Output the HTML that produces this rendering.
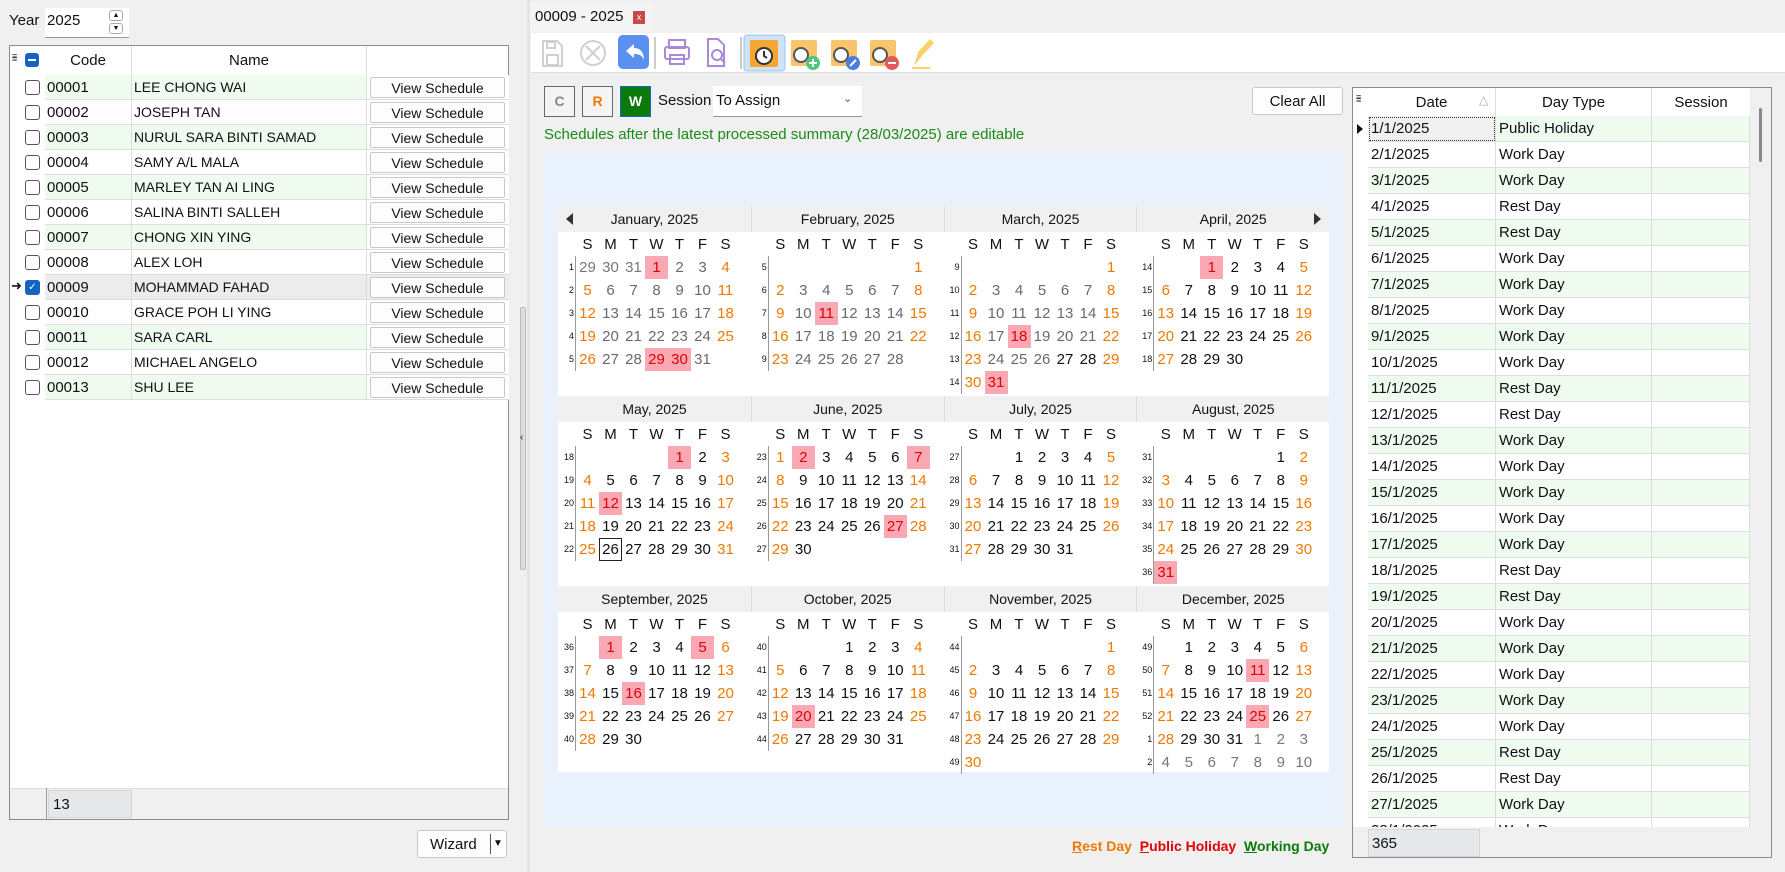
<!DOCTYPE html>
<html><head><meta charset="utf-8">
<style>
*{box-sizing:border-box;margin:0;padding:0}
body{width:1785px;height:872px;overflow:hidden;background:#f0f0f0;font-family:"Liberation Sans",sans-serif;font-size:14px;color:#111;position:relative}
.a{position:absolute}
.cell{position:absolute;display:flex;align-items:center;overflow:hidden;white-space:nowrap}
.btn{position:absolute;background:#fdfdfd;border:1px solid #c8c8c8;border-radius:3px;display:flex;align-items:center;justify-content:center}
.cb{position:absolute;width:15px;height:15px;border:1px solid #555;border-radius:3px;background:#fff}
</style></head><body>

<!-- LEFT PANEL -->
<div class="a" style="left:9px;top:12px;font-size:15px">Year</div>
<div class="a" style="left:45px;top:8px;width:84px;height:30px;background:#fff;border-bottom:1px solid #999"><span class="a" style="left:2px;top:4px;font-size:15px">2025</span>
<div class="a" style="left:64px;top:2px;width:14px;height:11px;border:1px solid #aaa;border-radius:3px;font-size:7px;text-align:center;line-height:9px">▲</div>
<div class="a" style="left:64px;top:15px;width:14px;height:11px;border:1px solid #aaa;border-radius:3px;font-size:7px;text-align:center;line-height:9px">▼</div></div>

<div class="a" id="lg" style="left:9px;top:45px;width:500px;height:775px;background:#fff;border:1px solid #8a8a92"></div>

<!-- splitter -->
<div class="a" style="left:527px;top:0;width:3px;height:872px;background:#e4e4e4"></div>
<div class="a" style="left:520px;top:307px;width:6px;height:263px;background:#ddd;border:1px solid #bbb;border-radius:2px"></div>
<div class="a" style="left:520px;top:432px;font-size:10px">‹</div>

<div class="btn" style="left:417px;top:830px;width:90px;height:28px;justify-content:flex-start;padding-left:12px;font-size:15px">Wizard<span class="a" style="left:72px;top:3px;width:1px;height:20px;background:#555"></span><span class="a" style="left:75px;top:7px;font-size:10px">▼</span></div>

<!-- MIDDLE -->
<div class="a" style="left:530px;top:2px;width:122px;height:30px;background:#f4f4f4"><span class="a" style="left:5px;top:6px;font-size:15px">00009 - 2025</span><span class="a" style="left:103px;top:9px;width:12px;height:13px;background:#c94848;color:#fff;font-size:9px;text-align:center;line-height:12px">x</span></div>
<div class="a" style="left:531px;top:33px;width:1254px;height:40px;background:#fff;border-bottom:1px solid #ddd"></div>
<svg class="a" style="left:531px;top:33px" width="420" height="40" viewBox="0 0 420 40">
 <g fill="none" stroke="#d0d0d0" stroke-width="2"><path d="M12 8h14l5 5v20H12z"/><rect x="16" y="22" width="11" height="10"/><rect x="16" y="9" width="8" height="6"/><circle cx="62" cy="20" r="12"/><path d="M55 13l14 14M69 13L55 27"/></g>
 <rect x="87" y="2" width="31" height="34" rx="5" fill="#5b8ff0"/><path d="M95 18l8-7v4c6 0 10 4 10 12c-2-5-5-6-10-6v4z" fill="#fff"/>
 <line x1="124" y1="4" x2="124" y2="36" stroke="#999"/>
 <g fill="none" stroke="#a88ad8" stroke-width="2"><rect x="138" y="7" width="16" height="8"/><rect x="134" y="14" width="24" height="12" rx="2"/><rect x="139" y="22" width="14" height="9"/><path d="M177 6h10l6 6v21h-16z"/><circle cx="186" cy="22" r="5"/><path d="M190 26l4 4"/></g>
 <line x1="210" y1="4" x2="210" y2="36" stroke="#999"/>
 <rect x="213" y="2" width="41" height="36" rx="3" fill="#cfe3f7" stroke="#9cc4ea"/>
 <rect x="219" y="7" width="28" height="27" rx="2" fill="#f4a534"/><circle cx="233" cy="23" r="8" fill="#fff" stroke="#333" stroke-width="2"/><path d="M233 18v5l3 2" stroke="#333" stroke-width="2" fill="none"/>
 <g><rect x="260" y="7" width="26" height="26" rx="2" fill="#f9c46b"/><circle cx="270" cy="22" r="7" fill="#fff" stroke="#555" stroke-width="2"/><circle cx="282" cy="30" r="7" fill="#4cc780"/><path d="M282 26v8M278 30h8" stroke="#fff" stroke-width="2"/></g>
 <g><rect x="300" y="7" width="26" height="26" rx="2" fill="#f9c46b"/><circle cx="310" cy="22" r="7" fill="#fff" stroke="#555" stroke-width="2"/><circle cx="322" cy="30" r="7" fill="#4a7de0"/><path d="M319 33l6-6" stroke="#fff" stroke-width="2"/></g>
 <g><rect x="339" y="7" width="26" height="26" rx="2" fill="#f9c46b"/><circle cx="349" cy="22" r="7" fill="#fff" stroke="#555" stroke-width="2"/><circle cx="361" cy="30" r="7" fill="#e05a5a"/><path d="M357 30h8" stroke="#fff" stroke-width="2"/></g>
 <path d="M383 33l4-14 12-13 4 4-12 13z" fill="#f9d26a"/><path d="M381 35h18" stroke="#f9d26a" stroke-width="2"/>
</svg>

<div class="a" style="left:544px;top:86px;width:31px;height:31px;border:1px solid #666;background:#f4f4f4;color:#888;font-weight:bold;text-align:center;line-height:29px">C</div>
<div class="a" style="left:582px;top:86px;width:31px;height:31px;border:1px solid #666;background:#f4f4f4;color:#f07800;font-weight:bold;text-align:center;line-height:29px">R</div>
<div class="a" style="left:620px;top:86px;width:31px;height:31px;border:1px solid #1565c0;background:#0a7a0a;color:#fff;font-weight:bold;text-align:center;line-height:29px">W</div>
<div class="a" style="left:658px;top:92px;font-size:15px">Session</div>
<div class="a" style="left:713px;top:86px;width:149px;height:31px;background:#fff;border-bottom:1px solid #999"><span class="a" style="left:3px;top:6px;font-size:15px">To Assign</span><span class="a" style="left:130px;top:6px;font-size:11px;color:#555">⌄</span></div>
<div class="btn" style="left:1252px;top:87px;width:91px;height:28px;font-size:15px">Clear All</div>
<div class="a" style="left:544px;top:126px;color:#1a8a1a;font-size:15px">Schedules after the latest processed summary (28/03/2025) are editable</div>

<div class="a" style="left:544px;top:151px;width:799px;height:676px;background:#e8f1fc"></div>
<div class="a" id="cal" style="left:558px;top:206px;width:771px;height:566px;background:#fff"></div>

<div class="a" style="left:1072px;top:838px;font-weight:bold;font-size:14px"><span style="color:#f07800"><u>R</u>est Day</span>&nbsp;&nbsp;<span style="color:#e00000"><u>P</u>ublic Holiday</span>&nbsp;&nbsp;<span style="color:#0a7a0a"><u>W</u>orking Day</span></div>

<!-- RIGHT GRID -->
<div class="a" id="rg" style="left:1352px;top:87px;width:420px;height:771px;background:#fff;border:1px solid #8a8a92;overflow:hidden"></div>

<script>
(function(){
 var g=document.getElementById('lg');var h='';
 var names=["LEE CHONG WAI","JOSEPH TAN","NURUL SARA BINTI SAMAD","SAMY A/L MALA","MARLEY TAN AI LING","SALINA BINTI SALLEH","CHONG XIN YING","ALEX LOH","MOHAMMAD FAHAD","GRACE POH LI YING","SARA CARL","MICHAEL ANGELO","SHU LEE"];
 h+='<div class="cell" style="left:35px;top:0;width:87px;height:29px;justify-content:center;border-right:1px solid #ddd;font-size:15px">Code</div>';
 h+='<div class="cell" style="left:122px;top:0;width:235px;height:29px;justify-content:center;border-right:1px solid #ddd;font-size:15px">Name</div>';
 h+='<div class="a" style="left:2px;top:9px;font-size:9px;line-height:3px;color:#333">≡<br>≡</div><div class="a" style="left:15px;top:7px;width:14px;height:14px;background:#1565c0;border-radius:3px"><div class="a" style="left:3px;top:6px;width:8px;height:2px;background:#fff"></div></div>';
 for(var i=0;i<13;i++){
  var y=29+25*i;var green=(i%2==0&&i!=8);var bg=i==8?'#ececec':(green?'#eefbee':'#fff');
  h+='<div class="cell" style="left:35px;top:'+y+'px;width:87px;height:25px;background:'+bg+';border-bottom:1px solid #ddd;border-right:1px solid #ddd;padding-left:2px;font-size:15px">'+('0000'+(i+1)).slice(-5)+'</div>';
  h+='<div class="cell" style="left:122px;top:'+y+'px;width:235px;height:25px;background:'+bg+';border-bottom:1px solid #ddd;border-right:1px solid #ddd;padding-left:2px">'+names[i]+'</div>';
  h+='<div class="a" style="left:357px;top:'+y+'px;width:142px;height:25px;border-bottom:1px solid #ddd;background:'+(i==8?'#ececec':'#fff')+'"></div>';
  h+='<div class="btn" style="left:360px;top:'+(y+2)+'px;width:135px;height:21px;border-radius:2px">View Schedule</div>';
  if(i==8){h+='<div class="cb" style="left:15px;top:'+(y+5)+'px;background:#1565c0;border-color:#1565c0;color:#fff;font-size:10px;text-align:center;line-height:13px">✓</div><div class="a" style="left:1px;top:'+(y+3)+'px;font-size:13px">➜</div>';}
  else h+='<div class="cb" style="left:15px;top:'+(y+5)+'px"></div>';
 }
 h+='<div class="a" style="left:0;top:742px;width:498px;height:31px;background:#f0f0f0;border-top:1px solid #ddd"></div><div class="cell" style="left:38px;top:744px;width:84px;height:28px;background:#e6e8ea;border:1px solid #d5d5d5;padding-left:4px;font-size:15px">13</div><div class="a" style="left:36px;top:742px;width:1px;height:31px;background:#999"></div>';
 g.innerHTML=h;
})();
(function(){
 var c=document.getElementById('cal');var h='';
 var mn=["January","February","March","April","May","June","July","August","September","October","November","December"];
 var ml=[31,28,31,30,31,30,31,31,30,31,30,31];
 var st=[3,6,6,2,4,0,2,5,1,3,6,1];
 var wk=[1,5,9,14,18,23,27,31,36,40,44,49];
 var hol={"1-1":1,"1-29":1,"1-30":1,"2-11":1,"3-18":1,"3-31":1,"4-1":1,"5-1":1,"5-12":1,"6-2":1,"6-7":1,"6-27":1,"8-31":1,"9-1":1,"9-5":1,"9-16":1,"10-20":1,"12-11":1,"12-25":1};
 var dw=["S","M","T","W","T","F","S"];
 for(var m=0;m<12;m++){
  var x0=192.75*(m%4),y0=190*Math.floor(m/4);
  h+='<div class="cell" style="left:'+x0+'px;top:'+y0+'px;width:193px;height:26px;background:#f0f0f0;justify-content:center;font-size:14px;border-left:'+(m%4?'1px solid #ddd':'0')+'">'+mn[m]+', 2025</div>';
  for(var d=0;d<7;d++)h+='<div class="cell" style="left:'+(x0+18+23*d)+'px;top:'+(y0+27)+'px;width:23px;height:22px;justify-content:center;font-size:15px">'+dw[d]+'</div>';
  var cells=[];
  if(m==0){cells=[{t:29,o:1},{t:30,o:1},{t:31,o:1}];} else for(var k=0;k<st[m];k++)cells.push(null);
  for(var d=1;d<=ml[m];d++)cells.push({t:d,m:m+1});
  if(m==11){var n=1;while(cells.length<42)cells.push({t:n++,o:1});}
  var rows=Math.ceil(cells.length/7);
  h+='<div class="a" style="left:'+(x0+17)+'px;top:'+(y0+50)+'px;width:1px;height:'+(23*rows)+'px;background:#999"></div>';
  for(var r=0;r<rows;r++){
   var w=wk[m]+r;if(w>52)w-=52;
   h+='<div class="a" style="left:'+x0+'px;top:'+(y0+56+23*r)+'px;width:16px;text-align:right;font-size:9px">'+w+'</div>';
  }
  for(var i=0;i<cells.length;i++){
   var e=cells[i];if(!e)continue;var col=i%7,r=Math.floor(i/7);
   var color,bg='';var past=(e.m&&(e.m<3||(e.m==3&&e.t<27)));
   if(e.o)color='#777';
   else if(hol[e.m+'-'+e.t]){color='#e00000';bg='background:#f9a8b4;';}
   else if(col==0||col==6)color='#f07800';
   else color=past?'#6a6a6a':'#111';
   var bd=(e.m==5&&e.t==26)?'border:1px solid #222;':'';
   h+='<div class="cell" style="left:'+(x0+18+23*col)+'px;top:'+(y0+50+23*r)+'px;width:23px;height:23px;justify-content:center;font-size:15px;color:'+color+';'+bg+bd+'">'+e.t+'</div>';
  }
 }
 h+='<div class="a" style="left:8px;top:7px;width:0;height:0;border-top:6px solid transparent;border-bottom:6px solid transparent;border-right:7px solid #333"></div>';
 h+='<div class="a" style="left:756px;top:7px;width:0;height:0;border-top:6px solid transparent;border-bottom:6px solid transparent;border-left:7px solid #333"></div>';
 c.innerHTML=h;
})();
(function(){
 var g=document.getElementById('rg');var h='';
 h+='<div class="cell" style="left:15px;top:0;width:128px;height:28px;justify-content:center;border-right:1px solid #ddd;font-size:15px">Date<span class="a" style="left:111px;top:5px;color:#aaa;font-size:12px">△</span></div>';
 h+='<div class="cell" style="left:143px;top:0;width:156px;height:28px;justify-content:center;border-right:1px solid #ddd;font-size:15px">Day Type</div>';
 h+='<div class="cell" style="left:299px;top:0;width:98px;height:28px;justify-content:center;font-size:15px">Session</div>';
 h+='<div class="a" style="left:3px;top:8px;font-size:9px;line-height:3px;color:#333">≡<br>≡</div>';
 var types=[];
 for(var d=1;d<=28;d++){var wd=(3+d-1)%7;types.push(d==1?'Public Holiday':(wd==0||wd==6?'Rest Day':'Work Day'));}
 for(var i=0;i<28;i++){
  var y=28+26*i;var gr=i%2==0;var bg=gr?'#eefbee':'#fff';
  var dbg=i==0?'#f0f0f0;outline:1px dotted #333;outline-offset:-2px':bg;
  h+='<div class="cell" style="left:15px;top:'+y+'px;width:128px;height:26px;background:'+dbg+';border-bottom:1px solid #ddd;border-right:1px solid #ddd;padding-left:3px;font-size:15px">'+(i+1)+'/1/2025</div>';
  h+='<div class="cell" style="left:143px;top:'+y+'px;width:156px;height:26px;background:'+bg+';border-bottom:1px solid #ddd;border-right:1px solid #ddd;padding-left:3px;font-size:15px">'+types[i]+'</div>';
  h+='<div class="cell" style="left:299px;top:'+y+'px;width:98px;height:26px;background:'+bg+';border-bottom:1px solid #ddd;border-right:1px solid #ddd"></div>';
 }
 h+='<div class="a" style="left:4px;top:28px;width:0;height:0;border-top:5px solid transparent;border-bottom:5px solid transparent;border-left:6px solid #111;margin-top:8px"></div>';
 h+='<div class="a" style="left:397px;top:0;width:22px;height:740px;background:#f0f0f0"></div><div class="a" style="left:406px;top:20px;width:3px;height:54px;background:#888;border-radius:2px"></div>';
 h+='<div class="a" style="left:0;top:739px;width:420px;height:32px;background:#f0f0f0"></div><div class="cell" style="left:15px;top:741px;width:112px;height:28px;background:#e6e8ea;border:1px solid #d5d5d5;padding-left:3px;font-size:15px">365</div>';
 g.innerHTML=h;
})();
</script>
</body></html>
